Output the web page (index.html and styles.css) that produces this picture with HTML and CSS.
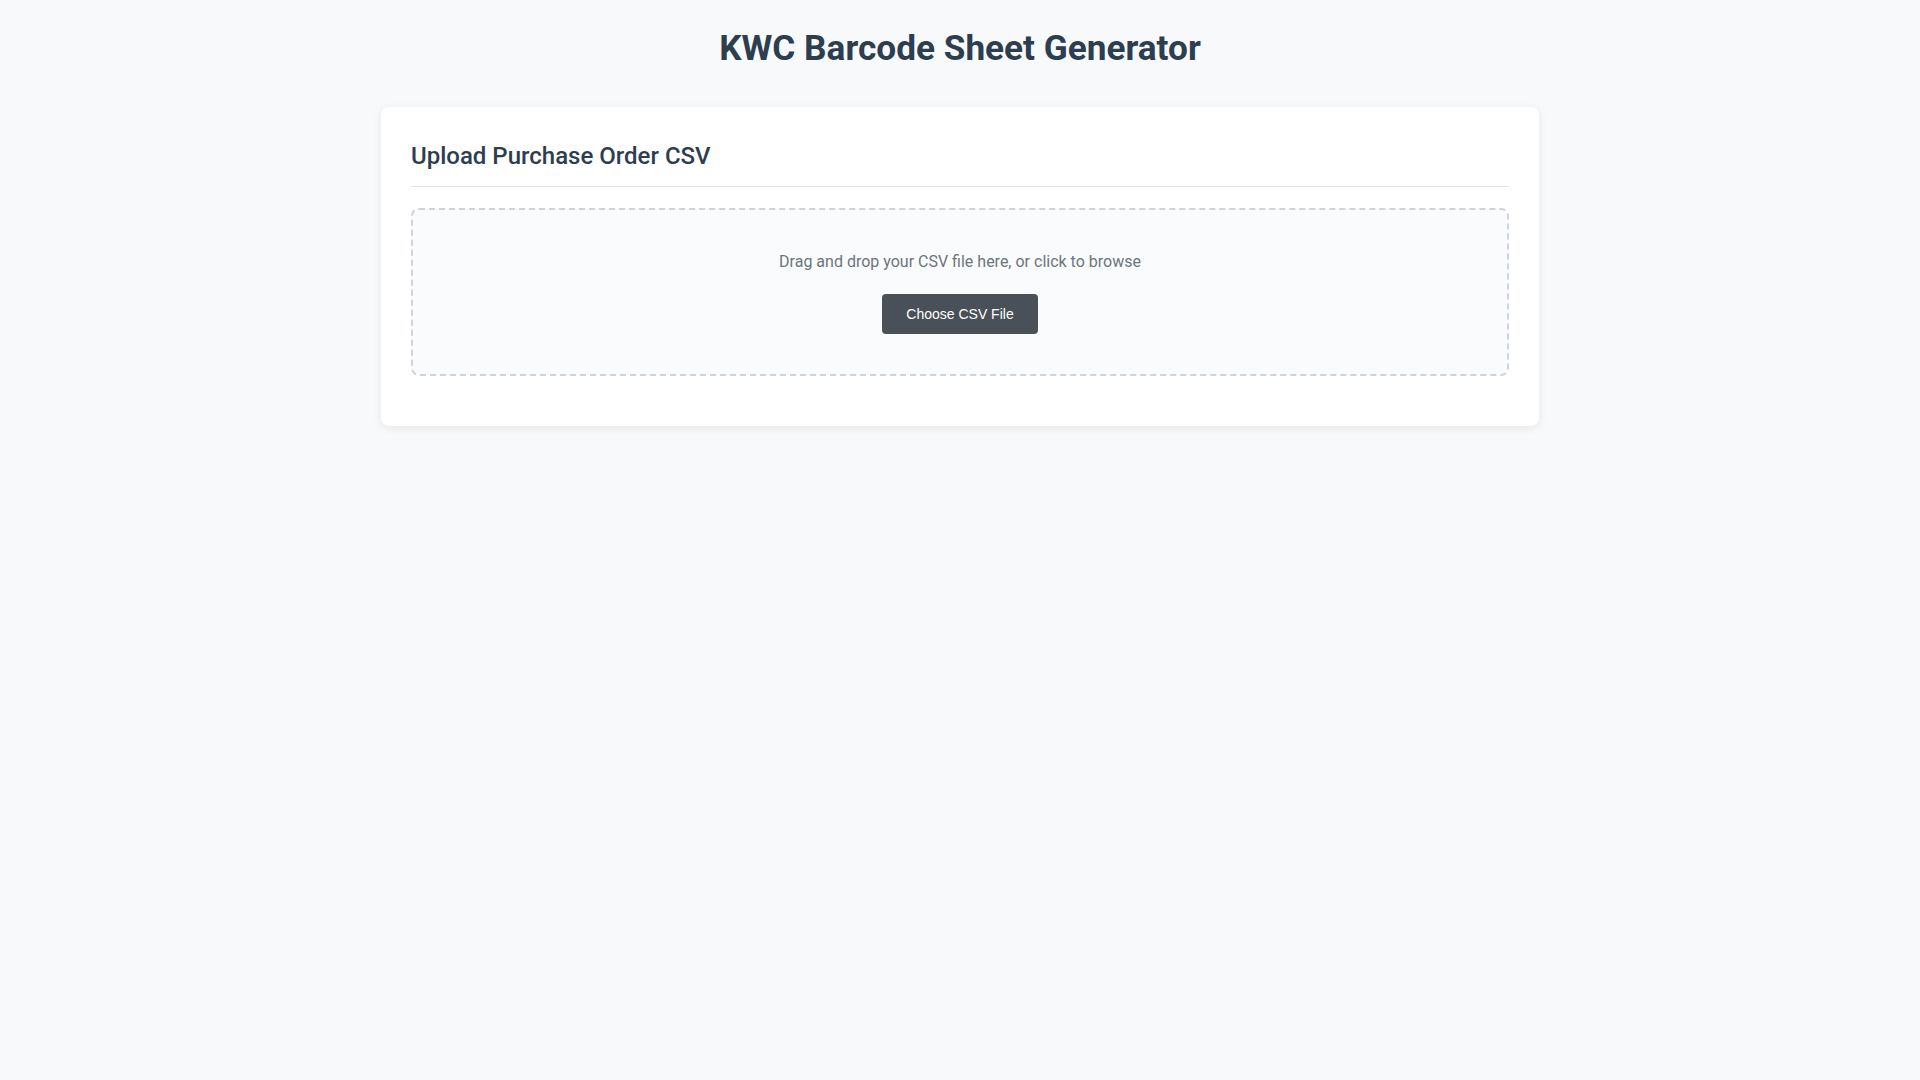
FILE: index.html
```html
<!DOCTYPE html>
<html lang="en">
<head>
<meta charset="utf-8">
<title>KWC Barcode Sheet Generator</title>
<link rel="stylesheet" href="styles.css">
</head>
<body>
<div class="container">
  <h1 class="page-title">KWC Barcode Sheet Generator</h1>
  <section class="card">
    <h2 class="card-title">Upload Purchase Order CSV</h2>
    <div class="dropzone">
      <p class="dropzone-text">Drag and drop your CSV file here, or click to browse</p>
      <button class="btn" type="button">Choose CSV File</button>
    </div>
  </section>
</div>
</body>
</html>
```

FILE: styles.css
```css
* { box-sizing: border-box; }
html, body {
  margin: 0;
  padding: 0;
  background: #f8f9fa;
  font-family: Roboto, "Liberation Sans", Arial, sans-serif;
  color: #2c3e50;
}
.container {
  max-width: 1200px;
  margin: 0 auto;
  padding: 28px 21px;
}
.page-title {
  margin: 0 0 39px;
  text-align: center;
  font-size: 35.2px;
  font-weight: 700;
  line-height: 40px;
  color: #2c3e50;
}
.card {
  background: #ffffff;
  border-radius: 8px;
  box-shadow: 0 2px 10px rgba(0, 0, 0, 0.08);
  padding: 30px 30px 50px;
}
.card-title {
  margin: 5px 0 21px;
  padding-bottom: 16px;
  border-bottom: 1px solid #e0e3e7;
  font-size: 24px;
  font-weight: 500;
  line-height: 28px;
  color: #2c3e50;
}
.dropzone {
  border: 2px dashed #ced4da;
  border-radius: 8px;
  background: #fafbfc;
  padding: 40px 20px 40px;
  text-align: center;
}
.dropzone-text {
  margin: 0 0 20px;
  font-size: 16px;
  line-height: 24px;
  color: #6c757d;
}
.btn {
  display: inline-block;
  height: 40px;
  padding: 0 24px;
  border: none;
  border-radius: 4px;
  background: #495057;
  color: #ffffff;
  font-family: "Liberation Sans", Arial, sans-serif;
  font-size: 14px;
  cursor: pointer;
}
```
